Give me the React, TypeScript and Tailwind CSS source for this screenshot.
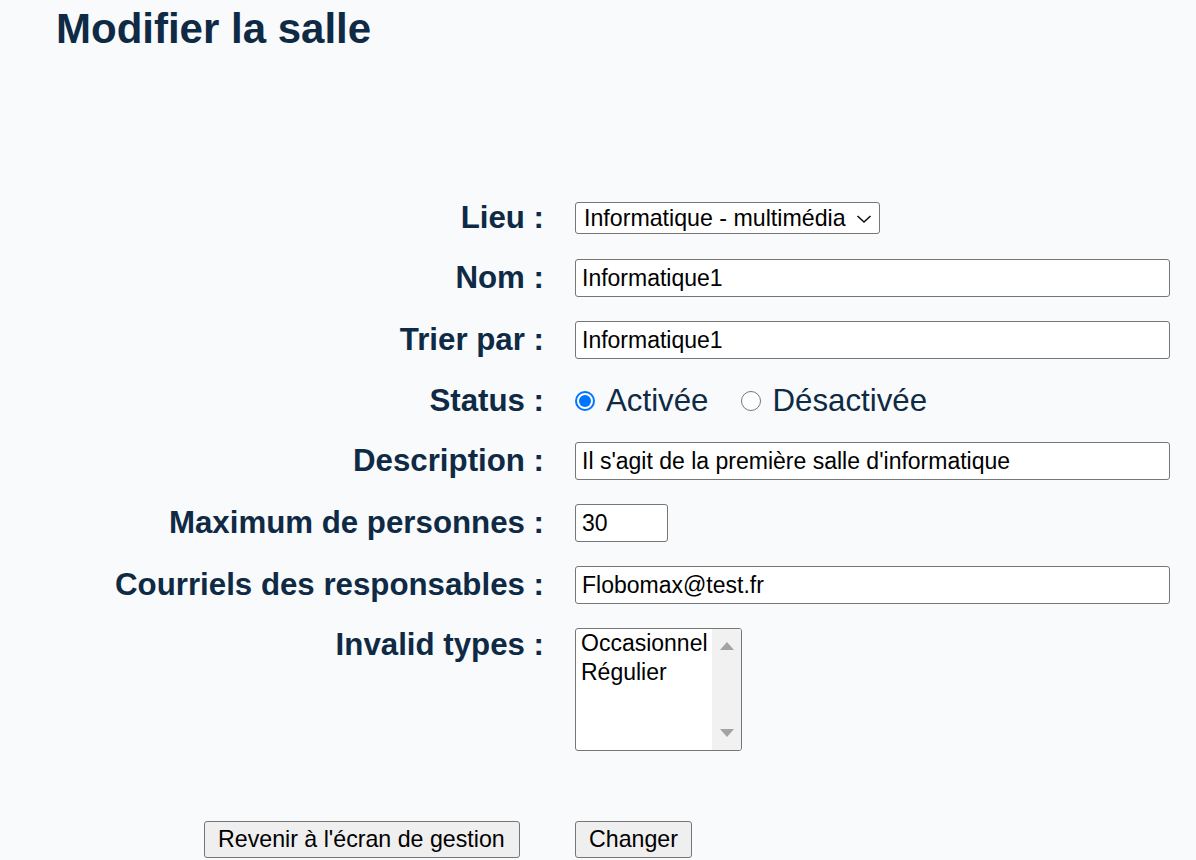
import React from "react";

function Label({ children }: { children: React.ReactNode }) {
  return (
    <div className="w-[544px] shrink-0 text-right text-[31.25px] leading-[34px] font-bold text-[#0f2a44]">
      {children}
    </div>
  );
}

function TextInput({ value, w = "w-[595px]" }: { value: string; w?: string }) {
  return (
    <input
      readOnly
      value={value}
      className={`h-[38px] ${w} rounded-[3px] border border-[#767676] bg-white px-[6px] text-[23px] text-black outline-none`}
    />
  );
}

function Radio({ checked }: { checked: boolean }) {
  return checked ? (
    <span className="flex h-[20px] w-[20px] shrink-0 items-center justify-center rounded-full border-[2px] border-[#0075ff] bg-white">
      <span className="h-[12px] w-[12px] rounded-full bg-[#0075ff]" />
    </span>
  ) : (
    <span className="h-[20px] w-[20px] shrink-0 rounded-full border-[1.5px] border-[#767676] bg-white" />
  );
}

export default function App() {
  return (
    <div className="min-h-screen bg-[#f8fafc] font-['Liberation_Sans',Arial,sans-serif] text-[#0f2a44]">
      <h1 className="pl-[56px] pt-[5px] text-[42px] leading-[48px] font-bold text-[#0f2a44]">
        Modifier la salle
      </h1>

      <div className="mt-[148px] flex flex-col gap-[24px]">
        {/* Lieu */}
        <div className="flex items-center">
          <Label>Lieu :</Label>
          <div className="ml-[31px] flex h-[32px] w-[305px] items-center justify-between rounded-[3px] border border-[#767676] bg-white pl-[8px] pr-[7px] text-[23.2px] text-black">
            <span>Informatique - multimédia</span>
            <svg width="16" height="10" viewBox="0 0 16 10" className="mt-[1px]">
              <polyline points="1.5,2 8,8 14.5,2" fill="none" stroke="#111" strokeWidth="1.6" />
            </svg>
          </div>
        </div>

        {/* Nom */}
        <div className="flex items-center">
          <Label>Nom :</Label>
          <div className="ml-[31px] flex">
            <TextInput value="Informatique1" />
          </div>
        </div>

        {/* Trier par */}
        <div className="flex items-center">
          <Label>Trier par :</Label>
          <div className="ml-[31px] flex">
            <TextInput value="Informatique1" />
          </div>
        </div>

        {/* Status */}
        <div className="flex h-[35px] items-center">
          <Label>Status :</Label>
          <div className="ml-[31px] flex items-center text-[31.25px] leading-[34px] text-[#0f2a44]">
            <Radio checked />
            <span className="ml-[11px]">Activée</span>
            <span className="ml-[33px] flex items-center">
              <Radio checked={false} />
            </span>
            <span className="ml-[11px]">Désactivée</span>
          </div>
        </div>

        {/* Description */}
        <div className="flex items-center">
          <Label>Description :</Label>
          <div className="ml-[31px] flex">
            <TextInput value="Il s'agit de la première salle d'informatique" />
          </div>
        </div>

        {/* Maximum */}
        <div className="flex items-center">
          <Label>Maximum de personnes :</Label>
          <div className="ml-[31px] flex">
            <TextInput value="30" w="w-[93px]" />
          </div>
        </div>

        {/* Courriels */}
        <div className="flex items-center">
          <Label>Courriels des responsables :</Label>
          <div className="ml-[31px] flex">
            <TextInput value="Flobomax@test.fr" />
          </div>
        </div>

        {/* Invalid types */}
        <div className="flex items-start">
          <Label>Invalid types :</Label>
          <div className="ml-[31px] flex h-[123px] w-[167px] overflow-hidden rounded-[3px] border border-[#767676] bg-white">
            <div className="flex-1 pl-[5px] text-[23px] leading-[29px] text-black">
              <div>Occasionnel</div>
              <div>Régulier</div>
            </div>
            <div className="flex w-[29px] shrink-0 flex-col items-center justify-between bg-[#f1f1f1] py-[13px]">
              <svg width="14" height="8" viewBox="0 0 14 8">
                <polygon points="7,0 14,8 0,8" fill="#a3a3a3" />
              </svg>
              <svg width="14" height="8" viewBox="0 0 14 8">
                <polygon points="0,0 14,0 7,8" fill="#a3a3a3" />
              </svg>
            </div>
          </div>
        </div>

        {/* Buttons */}
        <div className="mt-[46px] flex items-start">
          <div className="flex w-[544px] shrink-0 justify-end pr-[24px]">
            <button className="flex h-[37px] w-[316px] items-center justify-start rounded-[3px] border border-[#767676] bg-[#efefef] pl-[13px] text-[23.2px] text-black">
              Revenir à l'écran de gestion
            </button>
          </div>
          <button className="ml-[31px] flex h-[37px] w-[117px] items-center justify-start rounded-[3px] border border-[#767676] bg-[#efefef] pl-[13px] text-[23.2px] text-black">
            Changer
          </button>
        </div>
      </div>
    </div>
  );
}
